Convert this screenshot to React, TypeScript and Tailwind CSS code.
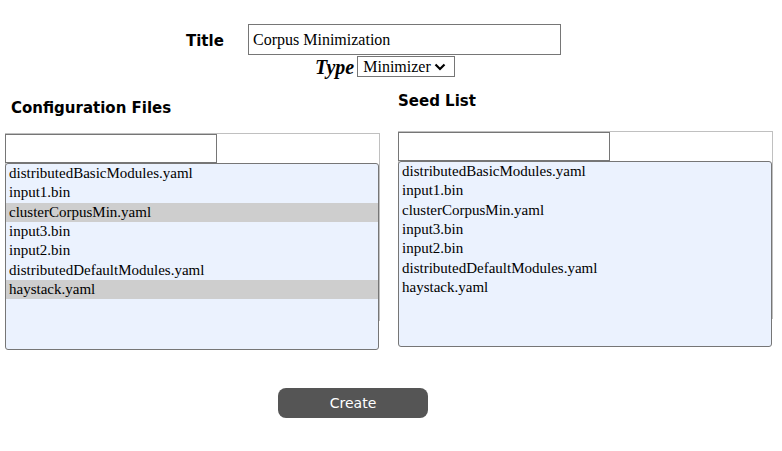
import React from "react";

const files = [
  "distributedBasicModules.yaml",
  "input1.bin",
  "clusterCorpusMin.yaml",
  "input3.bin",
  "input2.bin",
  "distributedDefaultModules.yaml",
  "haystack.yaml",
];

const FileList: React.FC<{ selected: string[]; listH: string }> = ({ selected, listH }) => (
  <div className="relative h-[188px] w-[375px] border border-[#c0c0c0]">
    <div className="absolute -left-px top-0">
      <input className="block h-[29px] w-[212px] border border-[#767676] bg-white outline-none" />
      <div className={`w-[374px] ${listH} overflow-hidden rounded-[3px] border border-[#767676] bg-[#ebf2fe] font-['Liberation_Serif',serif] text-[15px] text-black`}>
        {files.map((f) => (
          <div
            key={f}
            className={`h-[19.33px] pl-[3px] leading-[19.33px] ${selected.includes(f) ? "bg-[#cecece]" : ""}`}
          >
            {f}
          </div>
        ))}
      </div>
    </div>
  </div>
);

export default function App() {
  return (
    <div className="h-[451px] w-[782px] bg-white font-['DejaVu_Sans',sans-serif] text-black">
      <div className="flex items-center pl-[186px] pt-[24px]">
        <span className="w-[62px] pt-[3px] text-[15px] font-bold">Title</span>
        <div className="flex h-[31px] w-[313px] items-center border border-[#767676] px-[4px] font-['Liberation_Serif',serif] text-[16px]">
          Corpus Minimization
        </div>
      </div>
      <div className="mt-px flex h-[21px] items-center pl-[315px] font-['Liberation_Serif',serif]">
        <span className="mr-[3px] text-[20px] leading-none font-bold italic">Type</span>
        <div className="flex h-[21px] w-[98px] items-center border border-[#767676] pl-[5px] text-[16px]">
          <span>Minimizer</span>
          <svg className="ml-[3px]" width="12" height="8" viewBox="0 0 12 8">
            <path d="M1.5 1.5 L6 6 L10.5 1.5" fill="none" stroke="#000" strokeWidth="2.2" />
          </svg>
        </div>
      </div>
      <div className="mt-[14px] flex pl-[5px]">
        <div className="w-[375px]">
          <div className="h-[31px] pl-[6px] pt-[8px] text-[15px] font-bold leading-[18px]">Configuration Files</div>
          <div className="mt-[11px]">
            <FileList selected={["clusterCorpusMin.yaml", "haystack.yaml"]} listH="h-[187px]" />
          </div>
        </div>
        <div className="ml-[18px] w-[375px]">
          <div className="h-[31px] pt-px text-[15px] font-bold leading-[18px]">Seed List</div>
          <div className="mt-[9px]">
            <FileList selected={[]} listH="h-[186px]" />
          </div>
        </div>
      </div>
      <div className="mt-[67px] flex pl-[278px]">
        <button className="h-[30px] w-[150px] rounded-[8px] bg-[#555555] text-[14px] text-white">Create</button>
      </div>
    </div>
  );
}
